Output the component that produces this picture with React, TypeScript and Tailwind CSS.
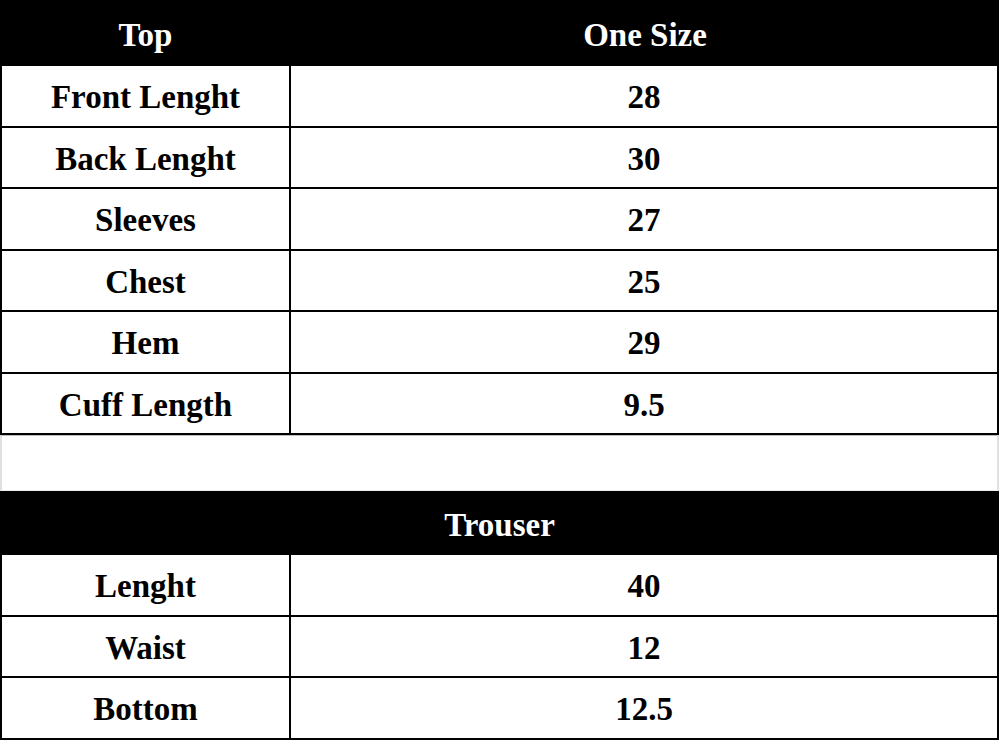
const topRows = [
  { label: "Front Lenght", value: "28" },
  { label: "Back Lenght", value: "30" },
  { label: "Sleeves", value: "27" },
  { label: "Chest", value: "25" },
  { label: "Hem", value: "29" },
  { label: "Cuff Length", value: "9.5" },
]

const trouserRows = [
  { label: "Lenght", value: "40" },
  { label: "Waist", value: "12" },
  { label: "Bottom", value: "12.5" },
]

function Row({ label, value }: { label: string; value: string }) {
  return (
    <div className="flex h-[61.5px] border-b-2 border-black pt-[4px]">
      <div className="flex w-[289px] items-center justify-center border-r-2 border-black -mt-[4px] pt-[4px]">{label}</div>
      <div className="flex flex-1 items-center justify-center">{value}</div>
    </div>
  )
}

export default function App() {
  return (
    <div
      className="h-[742px] w-[1000px] bg-white text-[33px] font-bold leading-none text-black"
      style={{ fontFamily: '"Liberation Serif", "Times New Roman", serif' }}
    >
      <div className="w-[999px]">
        <div className="flex h-[66px] bg-black pt-[4px] text-white">
          <div className="flex w-[291px] items-center justify-center">Top</div>
          <div className="flex flex-1 items-center justify-center">One Size</div>
        </div>
        <div className="border-x-2 border-black">
          {topRows.map((row) => (
            <Row key={row.label} {...row} />
          ))}
        </div>

        <div className="h-[56px] border-x-2 border-b border-[#e0e0e0] border-b-[#ececec] border-t border-t-[#bdbdbd]" />

        <div className="flex h-[64px] items-center justify-center bg-black pt-[4px] text-white">Trouser</div>
        <div className="border-x-2 border-black">
          {trouserRows.map((row) => (
            <Row key={row.label} {...row} />
          ))}
        </div>
      </div>
    </div>
  )
}
